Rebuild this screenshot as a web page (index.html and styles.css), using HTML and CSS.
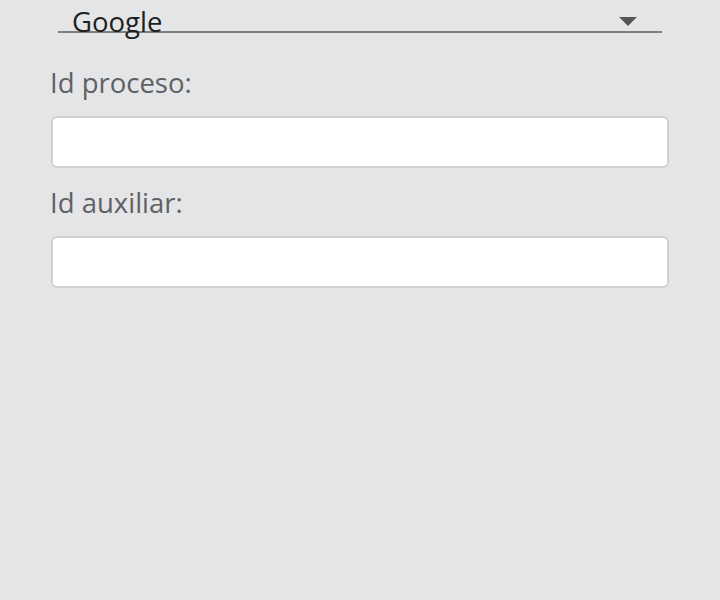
FILE: index.html
```html
<!DOCTYPE html>
<html lang="es">
<head>
<meta charset="utf-8">
<title>Formulario</title>
<link rel="stylesheet" href="styles.css">
</head>
<body>
<div class="form">
  <div class="select">
    <span class="select-value">Google</span>
    <span class="caret"></span>
  </div>
  <label class="label" for="proc">Id proceso:</label>
  <input class="input" id="proc" type="text">
  <label class="label" for="aux">Id auxiliar:</label>
  <input class="input" id="aux" type="text">
</div>
</body>
</html>
```
FILE: styles.css
```css
html, body {
  margin: 0;
  padding: 0;
  background: #e4e5e7;
  height: 100%;
}
body {
  font-family: "Open Sans", "Noto Sans", "Liberation Sans", sans-serif;
  font-size: 27.5px;
}
.form {
  display: flex;
  flex-direction: column;
  padding: 0 51px 0 51px;
}
.select {
  display: flex;
  align-items: flex-start;
  justify-content: space-between;
  margin: 0 7px 30px 7px;
  padding: 3px 25px 0 14px;
  height: 28px;
  border-bottom: 2px solid #7e7f81;
}
.select-value {
  line-height: 38px;
  color: #1e1f21;
}
.caret {
  width: 0;
  height: 0;
  margin-top: 14px;
  border-left: 9px solid transparent;
  border-right: 9px solid transparent;
  border-top: 9px solid #555658;
}
.label {
  display: block;
  line-height: 38px;
  color: #5f6163;
  padding-top: 1px;
  margin: 0 0 14px -1px;
}
.input {
  box-sizing: border-box;
  height: 52px;
  width: 618px;
  margin: 0 0 15px 0;
  border: 2px solid #cfd0d2;
  border-radius: 6px;
  background: #ffffff;
  font: inherit;
  padding: 0 10px;
  outline: none;
}
```
